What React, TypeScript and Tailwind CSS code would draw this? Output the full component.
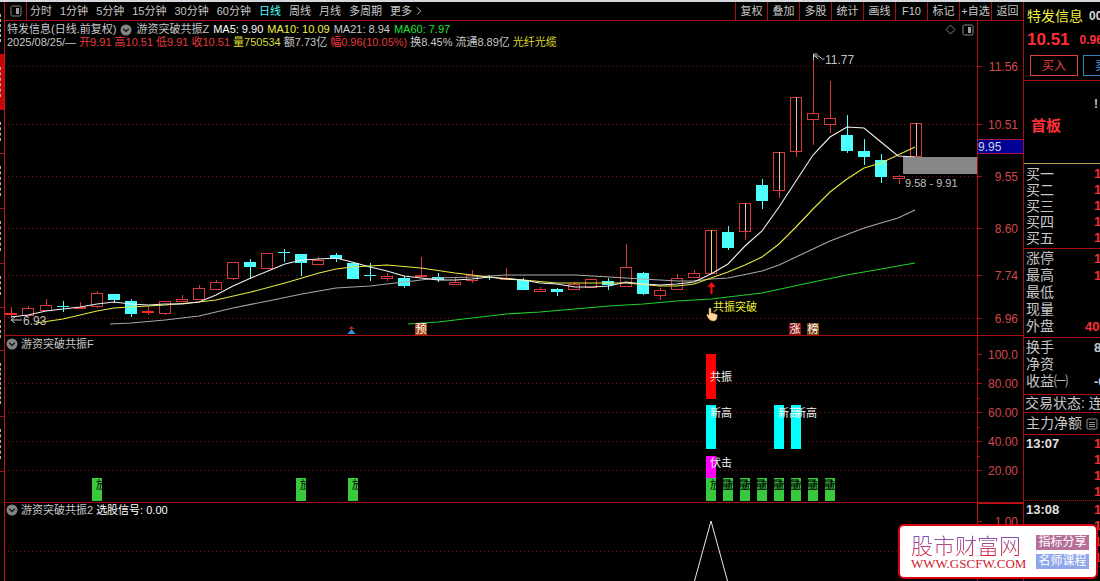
import { ChevronRight } from 'lucide-react'

type Point = [number, number]
// slot, high, body top, body bottom, low, kind
type Candle = [number, number, number, number, number, 'up' | 'down' | 'flat' | 'limit' | 'signal']

const FONT = "font-['Liberation_Sans','Noto_Sans_CJK_SC',sans-serif]"

const periods = ['分时', '1分钟', '5分钟', '15分钟', '30分钟', '60分钟', '日线', '周线', '月线', '多周期']
const tools = ['复权', '叠加', '多股', '统计', '画线', 'F10', '标记', '+自选', '返回']

const candles: Candle[] = [
  [0, 307, 313, 314, 318, 'flat'],
  [1, 306, 308, 315, 315, 'up'],
  [2, 299, 305, 310, 310, 'up'],
  [3, 301, 306, 307, 312, 'down'],
  [4, 302, 307, 308, 309, 'up'],
  [5, 291, 293, 306, 308, 'up'],
  [6, 294, 294, 300, 302, 'down'],
  [7, 299, 301, 314, 317, 'down'],
  [8, 307, 311, 312, 315, 'flat'],
  [9, 301, 301, 313, 315, 'up'],
  [10, 295, 299, 301, 301, 'up'],
  [11, 285, 288, 299, 299, 'up'],
  [12, 280, 282, 289, 289, 'up'],
  [13, 262, 262, 278, 280, 'up'],
  [14, 259, 262, 267, 279, 'down'],
  [15, 253, 253, 268, 269, 'up'],
  [16, 249, 252, 253, 262, 'down'],
  [17, 254, 254, 263, 276, 'down'],
  [18, 257, 260, 264, 264, 'up'],
  [19, 253, 255, 259, 262, 'down'],
  [20, 263, 263, 279, 279, 'down'],
  [21, 263, 275, 276, 281, 'down'],
  [22, 273, 276, 278, 281, 'up'],
  [23, 276, 278, 286, 288, 'down'],
  [24, 257, 275, 276, 276, 'up'],
  [25, 273, 277, 280, 282, 'down'],
  [26, 277, 282, 284, 285, 'up'],
  [27, 270, 275, 280, 283, 'up'],
  [28, 275, 277, 278, 280, 'down'],
  [29, 268, 278, 279, 279, 'up'],
  [30, 278, 280, 290, 290, 'down'],
  [31, 287, 289, 291, 292, 'up'],
  [32, 288, 289, 292, 296, 'down'],
  [33, 282, 284, 289, 289, 'up'],
  [34, 279, 279, 287, 287, 'up'],
  [35, 278, 281, 285, 290, 'down'],
  [36, 244, 267, 286, 286, 'up'],
  [37, 272, 273, 294, 295, 'down'],
  [38, 288, 290, 295, 300, 'up'],
  [39, 274, 278, 289, 289, 'up'],
  [40, 270, 273, 277, 278, 'up'],
  [41, 230, 230, 273, 273, 'signal'],
  [42, 226, 232, 248, 250, 'down'],
  [43, 203, 203, 231, 240, 'limit'],
  [44, 179, 185, 201, 209, 'down'],
  [45, 152, 152, 190, 198, 'limit'],
  [46, 97, 97, 151, 157, 'limit'],
  [47, 58, 113, 119, 145, 'up'],
  [48, 81, 118, 124, 133, 'up'],
  [49, 115, 135, 151, 153, 'down'],
  [50, 139, 151, 157, 165, 'down'],
  [51, 154, 160, 177, 183, 'down'],
  [52, 175, 176, 178, 184, 'up'],
  [53, 123, 123, 156, 156, 'limit'],
]

const ma5: Point[] = [
  [11, 317], [28, 315], [46, 311], [63, 309], [80, 307], [97, 304], [114, 302], [131, 304], [148, 305], [165, 304],
  [182, 304], [199, 302], [216, 295], [233, 286], [251, 278], [268, 271], [285, 264], [302, 260], [319, 259],
  [336, 258], [352, 262], [370, 267], [387, 271], [404, 276], [421, 278], [438, 280], [455, 280], [472, 279],
  [489, 277], [506, 279], [523, 280], [540, 283], [557, 284], [575, 287], [592, 287], [609, 286], [626, 282],
  [643, 284], [660, 285], [677, 284], [694, 282], [711, 274], [728, 264], [745, 246], [762, 231], [779, 207],
  [796, 181], [813, 155], [830, 137], [847, 127], [864, 128], [881, 142], [898, 156], [915, 157],
]
const ma10: Point[] = [
  [36, 323], [63, 319], [80, 315], [97, 311], [114, 308], [131, 307], [165, 305], [199, 302], [216, 300],
  [251, 292], [285, 283], [319, 273], [336, 269], [352, 267], [370, 266], [387, 265], [421, 268], [455, 273],
  [489, 277], [523, 280], [557, 283], [592, 283], [626, 283], [660, 286], [677, 286], [694, 284], [711, 278],
  [728, 272], [745, 265], [762, 257], [779, 244], [796, 227], [813, 209], [830, 192], [847, 179], [864, 168],
  [881, 163], [898, 155], [915, 147],
]
const ma21: Point[] = [
  [110, 324], [131, 323], [165, 320], [199, 316], [233, 308], [268, 301], [302, 294], [336, 288], [370, 286],
  [404, 282], [438, 278], [472, 277], [506, 275], [540, 275], [575, 275], [609, 277], [643, 279], [677, 281],
  [694, 281], [711, 279], [728, 278], [762, 271], [779, 265], [813, 249], [830, 241], [864, 228], [898, 218],
  [915, 210],
]
const ma60: Point[] = [
  [408, 324], [438, 322], [472, 318], [506, 314], [540, 312], [575, 309], [609, 306], [643, 304], [677, 301],
  [711, 299], [762, 293], [813, 282], [847, 275], [881, 269], [915, 263],
]

const averages = [
  { points: ma21, color: '#a8a8a8' },
  { points: ma60, color: '#1fd02a' },
  { points: ma10, color: '#e8e840' },
  { points: ma5, color: '#f0f0f0' },
]

const priceTicks: [number, string][] = [
  [66, '11.56'], [124, '10.51'], [176, '9.55'], [228, '8.60'], [275, '7.74'], [318, '6.96'],
]
const signalTicks: [number, string][] = [
  [354, '100.0'], [383, '80.00'], [412, '60.00'], [441, '40.00'], [470, '20.00'],
]

const slotX = (slot: number) => Math.round(11.4 + slot * 17.06)

function CandleMark({ candle }: { candle: Candle }) {
  const [slot, high, top, bottom, low, kind] = candle
  const x = slotX(slot)
  if (kind === 'down') {
    return (
      <g fill="#4dffff">
        <rect x={x} y={high} width={1} height={low - high} />
        <rect x={x - 6} y={top} width={12} height={bottom - top} />
      </g>
    )
  }
  if (kind === 'flat') {
    return (
      <g fill="#ff2a20">
        <rect x={x} y={high} width={1} height={low - high} />
        <rect x={x - 6} y={top} width={12} height={2} />
      </g>
    )
  }
  return (
    <g>
      <path d={`M${x + 0.5} ${high}V${top}M${x + 0.5} ${bottom}V${low}`} stroke="#d8393c" />
      <rect x={x - 5.5} y={top + 0.5} width={11} height={Math.max(bottom - top, 1)} fill="none" stroke="#d8393c" />
      {kind === 'limit' && <rect x={x} y={top} width={1} height={bottom - top} fill="#e8b8b8" />}
      {kind === 'signal' && <rect x={x} y={top} width={1} height={bottom - top} fill="#e8e040" />}
    </g>
  )
}

function Axis({ ticks, top, bottom, lines }: { ticks: [number, string][]; top: number; bottom: number; lines: number[] }) {
  return (
    <g>
      {lines.map((y) => (
        <path key={y} d={`M8 ${y + 0.5}H977`} stroke="#6e1212" strokeDasharray="1 3" />
      ))}
      <path d={`M977.5 ${top}V${bottom}`} stroke="#a80f14" />
      {ticks.map(([y, label]) => (
        <g key={label}>
          <path d={`M977 ${y + 0.5}h5`} stroke="#a80f14" />
          <text x={1018} y={y + 5} textAnchor="end" fontSize={12} fill="#d4474a">
            {label}
          </text>
        </g>
      ))}
    </g>
  )
}

function PanelIcon() {
  return (
    <svg width="12" height="12" viewBox="0 0 12 12" fill="none" aria-hidden="true">
      <rect x="1" y="1" width="10" height="10" rx="1.5" stroke="#8a8a8a" />
      <rect x="6" y="3" width="3" height="6" fill="#a0a0a0" />
    </svg>
  )
}

function Collapse({ label }: { label: string }) {
  return (
    <button type="button" aria-label={label} className="shrink-0">
      <svg width="12" height="12" viewBox="0 0 12 12" fill="none" className="block">
        <circle cx="6" cy="6" r="5.5" fill="#858585" />
        <path d="M3.2 4.8 6 7.5l2.8-2.7" stroke="#1a1a1a" strokeWidth="1.4" />
      </svg>
    </button>
  )
}

function Toolbar() {
  return (
    <nav className="flex h-[19px] items-stretch border-b border-[#a80f14] text-[11px] text-[#c8c8c8]">
      <button type="button" aria-label="侧栏" className="flex w-[22px] shrink-0 items-center justify-center border-r border-[#a80f14]">
        <PanelIcon />
      </button>
      <div className="flex flex-1 items-center gap-2 pl-[3px] whitespace-nowrap">
        {periods.map((period) => (
          <button key={period} type="button" className={period === '日线' ? 'text-[#4dffff]' : ''}>
            {period}
          </button>
        ))}
        <button type="button" className="flex items-center">
          更多
          <ChevronRight size={14} strokeWidth={1.5} />
        </button>
      </div>
      {tools.map((tool) => (
        <button key={tool} type="button" className="w-8 shrink-0 border-l border-[#a80f14] text-center whitespace-nowrap">
          {tool}
        </button>
      ))}
    </nav>
  )
}

function PriceChart() {
  return (
    <section className="border-b border-[#a80f14]">
      <div className="flex h-7">
        <div className="flex flex-1 justify-between pt-0.5 pr-[3px]">
          <div className="pl-0.5 text-[11px] leading-[13px] whitespace-nowrap text-[#c8c8c8]">
            <div className="flex items-center gap-1">
              <span>特发信息(日线.前复权)</span>
              <Collapse label="收起主图指标" />
              <span>游资突破共振Z</span>
              <span className="text-white">MA5: 9.90</span>
              <span className="text-[#f0f040]">MA10: 10.09</span>
              <span>MA21: 8.94</span>
              <span className="text-[#20e030]">MA60: 7.97</span>
            </div>
            <div className="flex gap-[3px]">
              <span>2025/08/25/—</span>
              <span className="text-[#e8393c]">开9.91</span>
              <span className="text-[#e8393c]">高10.51</span>
              <span className="text-[#e8393c]">低9.91</span>
              <span className="text-[#e8393c]">收10.51</span>
              <span className="text-[#d8d830]">量750534</span>
              <span>额7.73亿</span>
              <span className="text-[#e8393c]">幅0.96(10.05%)</span>
              <span>换8.45%</span>
              <span>流通8.89亿</span>
              <span className="text-[#d8d830]">光纤光缆</span>
            </div>
          </div>
          <div className="flex h-[13px] items-center gap-1.5">
            <svg width="11" height="11" viewBox="0 0 11 11" fill="none" aria-hidden="true">
              <path d="M5.5 1 10 5.5 5.5 10 1 5.5Z" stroke="#808080" />
            </svg>
            <PanelIcon />
          </div>
        </div>
        <div className="w-[46px] border-l border-[#a80f14]" />
      </div>

      <svg viewBox="5 49 1018 286" className="block w-full" role="img" aria-label="日线K线图">
        <Axis ticks={priceTicks} top={49} bottom={335} lines={priceTicks.map(([y]) => y)} />
        <g shapeRendering="crispEdges">
          {candles.map((candle) => (
            <CandleMark key={candle[0]} candle={candle} />
          ))}
        </g>
        {averages.map(({ points, color }) => (
          <polyline key={color} points={points.map((p) => p.join(',')).join(' ')} fill="none" stroke={color} strokeWidth={1.1} />
        ))}
        <rect x={903} y={157} width={74} height={17} fill="#868686" />

        <path d="M813.5 60v-6h4m-4 1 5 4m-4-3 4 0 4 3h2" stroke="#c8c8c8" fill="none" />
        <g fontSize={12} fill="#c0c0c0">
          <text x={825} y={64}>11.77</text>
          <text x={23} y={325}>6.93</text>
          <text x={905} y={187} fontSize={11}>9.58 - 9.91</text>
        </g>
        <path d="M11 320h11M15 317l-4 3 4 3" stroke="#c8c8c8" fill="none" />

        {/* price cursor */}
        <rect x={977.5} y={139.5} width={46} height={14} fill="#000094" stroke="#a01848" />
        <text x={978} y={151} fontSize={12} fill="#d0d0e0">9.95</text>

        {/* breakout signal */}
        <path d="M711.5 282l4 5h-3v7h-2v-7h-3z" fill="#ff0c0c" />
        <path
          d="M709 309c0-1.500 2-1.500 2 0v4.500c1-.8 2-.6 2.300.2 1-.6 2-.2 2.100.6 1-.3 1.800.3 1.800 1.200 0 3-1 5.500-4 5.500-3.200 0-4.700-2.500-6.200-5.200-.6-1.200.5-1.900 1.300-1.100l.7.8z"
          fill="#ffd9a0"
          stroke="#c98b48"
          strokeWidth={0.5}
        />
        <text x={713} y={311} fontSize={11} fill="#f0f030">共振突破</text>

        <path d="M351.500 326l3 3h-6z" fill="#c81818" />
        <path d="M351.500 329l4 5h-8z" fill="#3c94e0" />
        <g fontSize={11} fill="#fff">
          <rect x={415} y={323} width={12} height={12} fill="#a84810" />
          <text x={415.5} y={333}>预</text>
          <rect x={789} y={323} width={12} height={12} fill="#8c1010" />
          <text x={789.5} y={333}>涨</text>
          <rect x={807} y={323} width={12} height={12} fill="#7c4410" />
          <text x={807.5} y={333}>榜</text>
        </g>
      </svg>
    </section>
  )
}

function SignalChart() {
  const volumeSlots = [5, 17, 20, 41, 42, 43, 44, 45, 46, 47, 48]
  const highSlots = [41, 45, 46]
  return (
    <section className="border-b border-[#a80f14]">
      <div className="flex h-4">
        <div className="flex flex-1 items-center gap-[3px] pl-px text-[11px] text-[#c8c8c8]">
          <Collapse label="收起副图一" />
          <span>游资突破共振F</span>
        </div>
        <div className="w-[46px] border-l border-[#a80f14]" />
      </div>
      <svg viewBox="5 352 1018 150" className="block w-full overflow-visible" role="img" aria-label="游资突破共振F">
        <Axis ticks={signalTicks} top={352} bottom={502} lines={[383, 412, 441, 470]} />
        <path d="M977 369.500h3M977 398.500h3M977 427.500h3M977 456.500h3" stroke="#a80f14" />
        <rect x={706} y={354} width={10} height={45} fill="#ff0000" />
        {highSlots.map((slot) => (
          <rect key={slot} x={slotX(slot) - 5} y={405} width={10} height={44} fill="#00ffff" />
        ))}
        <rect x={706} y={456} width={10} height={22} fill="#ff00ff" />
        {volumeSlots.map((slot) => (
          <rect key={slot} x={slotX(slot) - 5} y={478} width={10} height={23} fill="#38c93c" />
        ))}
        <g fontSize={11} fill="#f4f4f4">
          <text x={710} y={381}>共振</text>
          {highSlots.map((slot) => (
            <text key={slot} x={slotX(slot) - 1} y={417}>新高</text>
          ))}
          <text x={710} y={467}>伏击</text>
        </g>
        {/* black labels only show where they cross a green bar */}
        <g fontSize={11} fill="#000">
          {volumeSlots.map((slot) => (
            <text key={slot} x={slotX(slot) - 1} y={489}>放量</text>
          ))}
        </g>
      </svg>
    </section>
  )
}

function PickChart() {
  return (
    <section>
      <div className="flex h-[13px]">
        <div className="flex flex-1 items-center gap-[3px] pt-px pl-px text-[11px] leading-3 text-[#c8c8c8]">
          <Collapse label="收起副图二" />
          <span>游资突破共振2</span>
          <span className="text-white">选股信号: 0.00</span>
        </div>
        <div className="w-[46px] border-t border-l border-[#c81018]" />
      </div>
      <svg viewBox="5 516 1018 65" className="block w-full overflow-visible" role="img" aria-label="选股信号">
        <Axis ticks={[[521, '1.00']]} top={516} bottom={581} lines={[551]} />
        <path d="M694.500 581 711 521l16.500 60" stroke="#e8e8e8" fill="none" />
      </svg>
    </section>
  )
}

function QuoteRow({ label, value, bright = true }: { label: string; value: string; bright?: boolean }) {
  return (
    <div className="flex">
      <dt className="w-[70px] shrink-0 pl-0.5">{label}</dt>
      <dd className={bright ? 'text-[13px] font-bold text-[#f03038]' : 'text-[13px] font-bold'}>{value}</dd>
    </div>
  )
}

function QuotePanel() {
  return (
    <aside className="w-[77px] shrink-0 overflow-hidden border-l border-[#a80f14] text-[14px] whitespace-nowrap text-[#c8c8c8]">
      <div className="h-[79px] border-b border-[#a80f14] pl-[3px]">
        <div className="flex h-7 items-center gap-1.5 text-[#f0f040]">
          特发信息 <span className="text-[12px] font-bold text-[#d8d8d8]">000070</span>
        </div>
        <div className="flex h-5 items-center gap-2.5 font-bold text-[#ff3038]">
          <span className="text-[17px]">10.51</span>
          <span className="text-[12px]">0.96</span>
        </div>
        <div className="mt-[5px] flex gap-[5px] pl-[3px] text-[12px]">
          <button type="button" className="h-[21px] w-12 shrink-0 border border-[#e04040] leading-[18px] text-[#e04040]">买入</button>
          <button type="button" className="h-[21px] w-12 shrink-0 border border-[#3c80c0] leading-[18px] text-[#4c98e0]">卖出</button>
        </div>
      </div>
      <div className="relative flex h-[83px] items-center border-b border-[#b89850] pt-2 pl-[7px] text-[15px] font-bold text-[#ff3038]">
        首板
        <span className="absolute top-3.5 left-[70px] text-[12px] text-[#c8c8c8]">!</span>
      </div>
      <dl className="h-[85px] border-b border-[#a80f14] pt-0.5 leading-4">
        {['买一', '买二', '买三', '买四', '买五'].map((label) => (
          <QuoteRow key={label} label={label} value="10.51" />
        ))}
      </dl>
      <dl className="h-[89px] border-b border-[#a80f14] pt-px leading-[17px]">
        <QuoteRow label="涨停" value="10.51" />
        <QuoteRow label="最高" value="10.51" />
        <QuoteRow label="最低" value="" />
        <QuoteRow label="现量" value="" />
        <div className="flex">
          <dt className="w-[61px] shrink-0 pl-0.5">外盘</dt>
          <dd className="text-[13px] font-bold text-[#ff3038]">40万</dd>
        </div>
      </dl>
      <dl className="h-[57px] border-b border-[#a80f14] pt-px leading-[17px]">
        <QuoteRow label="换手" value="8.45" bright={false} />
        <QuoteRow label="净资" value="" />
        <QuoteRow label="收益㈠" value="-0.0" bright={false} />
      </dl>
      <p className="h-[18px] border-b border-[#a80f14] pl-px leading-[17px]">交易状态: 连续</p>
      <p className="flex h-[22px] items-center gap-1 border-b border-[#a80f14] pl-0.5">
        主力净额
        <svg width="12" height="12" viewBox="0 0 12 12" className="shrink-0" fill="none" stroke="#909090" aria-hidden="true">
          <rect x="1" y="1" width="10" height="10" rx="1" />
          <path d="M3 4.500h6M3 6.500h6M3 8.500h6" />
        </svg>
      </p>
      <Trades time="13:07" />
      <Trades time="13:08" />
    </aside>
  )
}

function Trades({ time }: { time: string }) {
  return (
    <div className="flex h-[66px] border-b border-dotted border-[#a80f14] text-[13px] leading-4 font-bold">
      <time className="w-[70px] shrink-0 pt-px pl-0.5 text-[#e0e0e0]">{time}</time>
      <ul className="pt-px text-[#f03038]">
        <li>10.51</li>
        <li>10.51</li>
        <li>10.51</li>
        <li>10.51</li>
      </ul>
    </div>
  )
}

// Narrow visible edge of the collapsed page tabs
function SideTabs() {
  const tabs = ['h-[53px]', 'h-[55px] bg-[#c80808]', 'h-11', 'h-[55px]', 'h-[55px]', 'h-11', 'h-[43px]', 'h-[66px]', 'h-[55px]']
  return (
    <div className="w-[5px] shrink-0 border-r border-[#c81018]">
      {tabs.map((tab, i) => (
        <div key={i} className={`border-b border-[#a80f14] py-3 ${tab}`}>
          <div className="h-full w-px border-l border-dashed border-[#b0b0b0]" />
        </div>
      ))}
    </div>
  )
}

function Watermark() {
  return (
    <div className="absolute right-0.5 bottom-0.5 flex h-[55px] w-[200px] items-center justify-between rounded-md border-2 border-[#d8000f] bg-white pr-[7px] pl-[11px]">
      <div className="whitespace-nowrap">
        <div className="bg-gradient-to-b from-[#6a4cd0] to-[#e01838] bg-clip-text font-['Noto_Sans_CJK_SC',sans-serif] text-[22px] leading-6 font-light text-transparent">
          股市财富网
        </div>
        <div className="font-['Liberation_Serif',serif] text-[13px] leading-4 text-[#d02030]">WWW.GSCFW.COM</div>
      </div>
      <div className="flex flex-col gap-1 text-center text-[12px] leading-[15px] whitespace-nowrap text-white">
        <span className="w-[53px] bg-[#b56f98]">指标分享</span>
        <span className="w-[53px] bg-[#8ea6ea]">名师课程</span>
      </div>
    </div>
  )
}

export default function App() {
  return (
    <div className={`relative min-h-screen overflow-hidden bg-black ${FONT}`}>
      <div className="h-0.5 bg-[#d4d8dc]" />
      <div className="flex">
        <SideTabs />
        <main className="min-w-0 flex-1">
          <Toolbar />
          <PriceChart />
          <SignalChart />
          <PickChart />
        </main>
        <QuotePanel />
      </div>
      <Watermark />
    </div>
  )
}
